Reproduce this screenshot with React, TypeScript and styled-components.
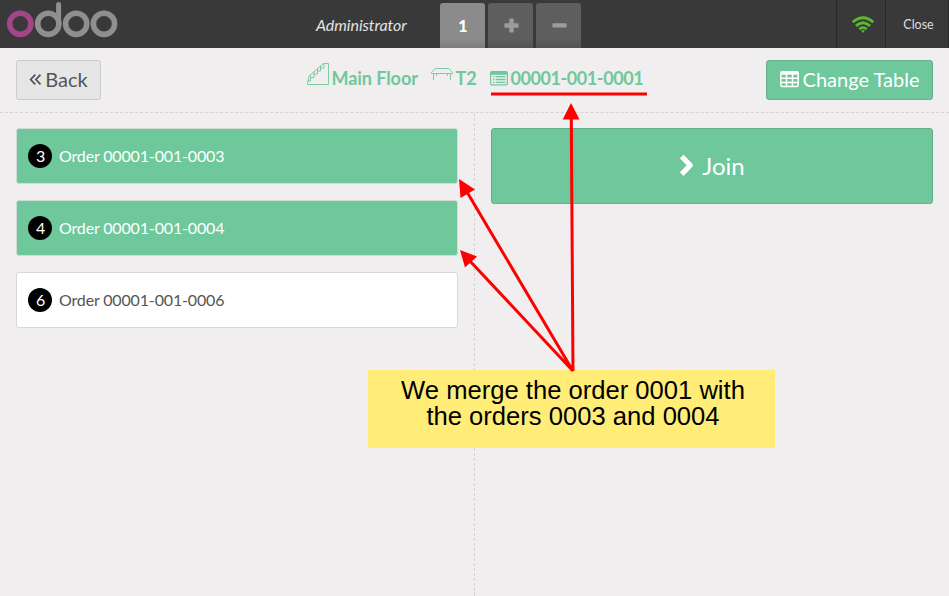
import React from "react";
import styled, { createGlobalStyle } from "styled-components";

const Global = createGlobalStyle`
  * { box-sizing: border-box; }
  body { margin: 0; background: #f0eeee; font-family: Lato, sans-serif; color: #555; }
`;

const Screen = styled.div`
  position: relative;
  width: 949px;
  height: 596px;
  display: flex;
  flex-direction: column;
  overflow: hidden;
  background: #f0eeee;
`;

const TopBar = styled.header`
  display: flex;
  height: 48px;
  background: #393939;
`;

const Brand = styled.div`
  width: 265px;
  padding: 2px 0 0 6px;
`;

const Username = styled.div`
  width: 175px;
  padding: 15px 0 0 51px;
  font-size: 16px;
  line-height: 20px;
  font-style: italic;
  letter-spacing: -0.05px;
  color: #e3e3e3;
`;

const OrderTabs = styled.nav`
  display: flex;
  flex: 1;
  gap: 3px;
  padding-top: 3px;
`;

const Tab = styled.button<{ $active?: boolean }>`
  width: 45px;
  height: 45px;
  padding: 0 0 1px 1px;
  display: flex;
  align-items: center;
  justify-content: center;
  border: 0;
  border-radius: 3px 3px 0 0;
  font: 900 16px Lato, sans-serif;
  color: ${(p) => (p.$active ? "#fff" : "#9c9c9c")};
  background: ${(p) =>
    p.$active
      ? "linear-gradient(#8b8b8b 0 80%, #7c7c7c)"
      : "linear-gradient(#5e5e5e 0 80%, #535353)"};
`;

const StatusCell = styled.div<{ $width: number }>`
  width: ${(p) => p.$width}px;
  display: flex;
  align-items: center;
  justify-content: center;
  padding: 1px 0 0 3px;
  border-left: 1px solid #292929;
  font-size: 12.5px;
  color: #ddd;
  &:last-child { border-right: 1px solid #292929; }
`;

const SubHeader = styled.div`
  display: flex;
  justify-content: space-between;
  height: 65px;
  padding: 12px 16px;
  border-bottom: 1px dashed #d4d3d3;
`;

const Button = styled.button<{ $primary?: boolean; $width: number }>`
  width: ${(p) => p.$width}px;
  height: 40px;
  padding: 0 0 2px;
  display: flex;
  align-items: center;
  justify-content: center;
  gap: 4px;
  border: 1px solid ${(p) => (p.$primary ? "#64af8a" : "#cacccc")};
  border-radius: 3px;
  background: ${(p) => (p.$primary ? "#6ec89b" : "#e6e6e6")};
  color: ${(p) => (p.$primary ? "#fff" : "#555")};
  font: 20px Lato, sans-serif;
`;

const Crumbs = styled.div`
  display: flex;
  width: 338px;
  margin-left: 82px;
  font-size: 18px;
  line-height: 22px;
  font-weight: 700;
  color: #6ec89b;
`;

const Crumb = styled.span<{ $width: number; $gap: number; $tight?: boolean }>`
  display: flex;
  width: ${(p) => p.$width}px;
  gap: ${(p) => p.$gap}px;
  padding-top: 7px;
  letter-spacing: ${(p) => (p.$tight ? "-0.43px" : "-0.06px")};
  white-space: nowrap;
  svg { flex: none; }
`;

const StairsIcon = styled.svg`margin-top: -5px;`;
const ListIcon = styled.svg`margin-top: 4px;`;

const Columns = styled.main`
  display: grid;
  grid-template-columns: 475px 474px;
  flex: 1;
`;

const OrderList = styled.section`
  display: flex;
  flex-direction: column;
  gap: 16px;
  padding: 15px 16px;
  border-right: 1px dashed #d4d3d3;
`;

const Order = styled.div<{ $selected?: boolean }>`
  display: flex;
  align-items: center;
  gap: 7px;
  height: 56px;
  padding-left: 11px;
  border: 1px solid #d5d9d7;
  border-radius: 3px;
  font-size: 16px;
  letter-spacing: -0.155px;
  background: ${(p) => (p.$selected ? "#6ec89b" : "#fff")};
  color: ${(p) => (p.$selected ? "#fff" : "#555")};
`;

const OrderName = styled.span`
  padding-bottom: 2px;
`;

const Badge = styled.span`
  width: 24px;
  height: 24px;
  padding-left: 1px;
  border-radius: 50%;
  background: #000;
  color: #fff;
  line-height: 24px;
  text-align: center;
`;

const Actions = styled.section`
  padding: 15px 16px;
`;

const JoinButton = styled(Button)`
  height: 76px;
  gap: 6px;
  font-size: 24px;
`;

const Note = styled.div`
  position: absolute;
  left: 368px;
  top: 370px;
  width: 407px;
  height: 78px;
  padding: 7px 0 0 3px;
  background: #ffed77;
  color: #000;
  font: 25.6px/26px "Liberation Sans", sans-serif;
  text-align: center;
  white-space: nowrap;
`;

const NoteLine = styled.div`
  height: 26px;
`;

const Arrows = styled.svg`
  position: absolute;
  inset: 0;
  pointer-events: none;
`;

const orders = [
  { seats: 3, name: "Order 00001-001-0003", selected: true },
  { seats: 4, name: "Order 00001-001-0004", selected: true },
  { seats: 6, name: "Order 00001-001-0006", selected: false },
];

export default function App() {
  return (
    <Screen>
      <Global />
      <TopBar>
        <Brand>
          <svg width="114" height="38" fill="none" strokeWidth="5.6">
            <circle cx="14.3" cy="21.8" r="10.6" stroke="#a24689" />
            <g stroke="#8f8f8f">
              <circle cx="42.3" cy="21.8" r="10.6" />
              <circle cx="70.2" cy="21.8" r="10.6" />
              <circle cx="98" cy="21.8" r="10.6" />
              <path d="M52.6 22V2.5" strokeWidth="5" strokeLinecap="round" />
            </g>
          </svg>
        </Brand>
        <Username>Administrator</Username>
        <OrderTabs>
          <Tab $active>1</Tab>
          <Tab>
            <svg width="15" height="15" fill="currentColor">
              <path d="M6 .5h3q.7 0 .7.7v4.100h4.100q.8 0 .8.8v2.800q0 .8-.8.8H9.700v4.100q0 .7-.7.7H6q-.7 0-.7-.7V9.700H1.200q-.8 0-.8-.8V6.100q0-.8.8-.8h4.100V1.200q0-.7.7-.7z" />
            </svg>
          </Tab>
          <Tab>
            <svg width="15" height="15">
              <rect x=".4" y="5.200" width="14.200" height="4.200" rx=".8" fill="currentColor" />
            </svg>
          </Tab>
        </OrderTabs>
        <StatusCell $width={49}>
          <svg width="24" height="18" viewBox="0 0 24 18" fill="none" stroke="#5bb832" strokeWidth="2.800">
            <path d="M1.700 6.300Q12-2.900 22.300 6.300M5 9.900Q12 3.500 19 9.900M8.300 13.300Q12 9.900 15.700 13.300" />
            <path d="M10.200 14.800Q12 13.400 13.800 14.800L12 16.900z" fill="#5bb832" stroke="none" />
          </svg>
        </StatusCell>
        <StatusCell $width={64}>Close</StatusCell>
      </TopBar>

      <SubHeader>
        <Button $width={85}>
          <svg width="12" height="14" fill="none" stroke="currentColor" strokeWidth="1.800">
            <path d="M6.300 2.700L1.700 7.500L6.300 12.300M11.500 2.700L6.900 7.500L11.500 12.300" />
          </svg>
          Back
        </Button>
        <Crumbs>
          <Crumb $width={125} $gap={2}>
            <StairsIcon width="24" height="24" fill="none" stroke="currentColor" strokeWidth=".9">
              <path d="M1.500 22.500H22.500V1.500H17.500L2.500 14.500V19M1.500 22.500V19H4.500V15.500H8V12H11.500V9H14.500V6H18V1.500M4.500 16V12.500M8 13V9.500M11.500 10V6.500M14.500 7V4" />
            </StairsIcon>
            Main Floor
          </Crumb>
          <Crumb $width={59} $gap={3}>
            <svg width="22" height="16" fill="none" stroke="currentColor" strokeWidth=".9">
              <path d="M4 1.500H18L21.500 5.500V6.500H.5V5.500zM2.500 7V13M19.500 7V13M5.500 7V9M16.500 7V9" />
            </svg>
            T2
          </Crumb>
          <Crumb $width={154} $gap={3} $tight>
            <ListIcon width="18" height="15" fill="none" stroke="currentColor">
              <rect x=".6" y=".6" width="16.800" height="13.300" rx="1.300" strokeWidth="1.200" />
              <path d="M1 2.300H17" strokeWidth="3" />
              <path d="M3 5.700H4.500M3 8.500H4.500M3 11.300H4.500M5.700 5.700H15.500M5.700 8.500H15.500M5.700 11.300H15.500" strokeWidth="1.300" />
            </ListIcon>
            00001-001-0001
          </Crumb>
        </Crumbs>
        <Button $primary $width={167}>
          <svg width="19" height="18" fill="none" stroke="currentColor" strokeWidth="1.500">
            <rect x=".8" y="1.800" width="17.400" height="14.600" rx="1.500" />
            <path d="M1 3.200H18" strokeWidth="3" />
            <path d="M1 8.300H18M1 12.500H18M6.500 3V16M12.500 3V16" />
          </svg>
          Change Table
        </Button>
      </SubHeader>

      <Columns>
        <OrderList>
          {orders.map((o) => (
            <Order key={o.name} $selected={o.selected}>
              <Badge>{o.seats}</Badge>
              <OrderName>{o.name}</OrderName>
            </Order>
          ))}
        </OrderList>
        <Actions>
          <JoinButton $primary $width={442}>
            <svg width="17" height="24" fill="none" stroke="currentColor" strokeWidth="5.200" strokeLinejoin="round">
              <path d="M2.700 3.500L11.300 12.300L2.700 21.100" />
            </svg>
            Join
          </JoinButton>
        </Actions>
      </Columns>

      <Note>
        <NoteLine>We merge the order 0001 with</NoteLine>
        <NoteLine>the orders 0003 and 0004</NoteLine>
      </Note>
      <Arrows width="949" height="596" stroke="#f00" strokeWidth="3" fill="#f00">
        <path d="M491 94H647M573 371L571.300 118M573 371L467 192M573 371L469 260" />
        <path stroke="none" d="M571 103L579.500 119.500H562.700zM459 179L475 189.500L460.500 198zM460 250L477 256.500L465 267.500z" />
      </Arrows>
    </Screen>
  );
}
